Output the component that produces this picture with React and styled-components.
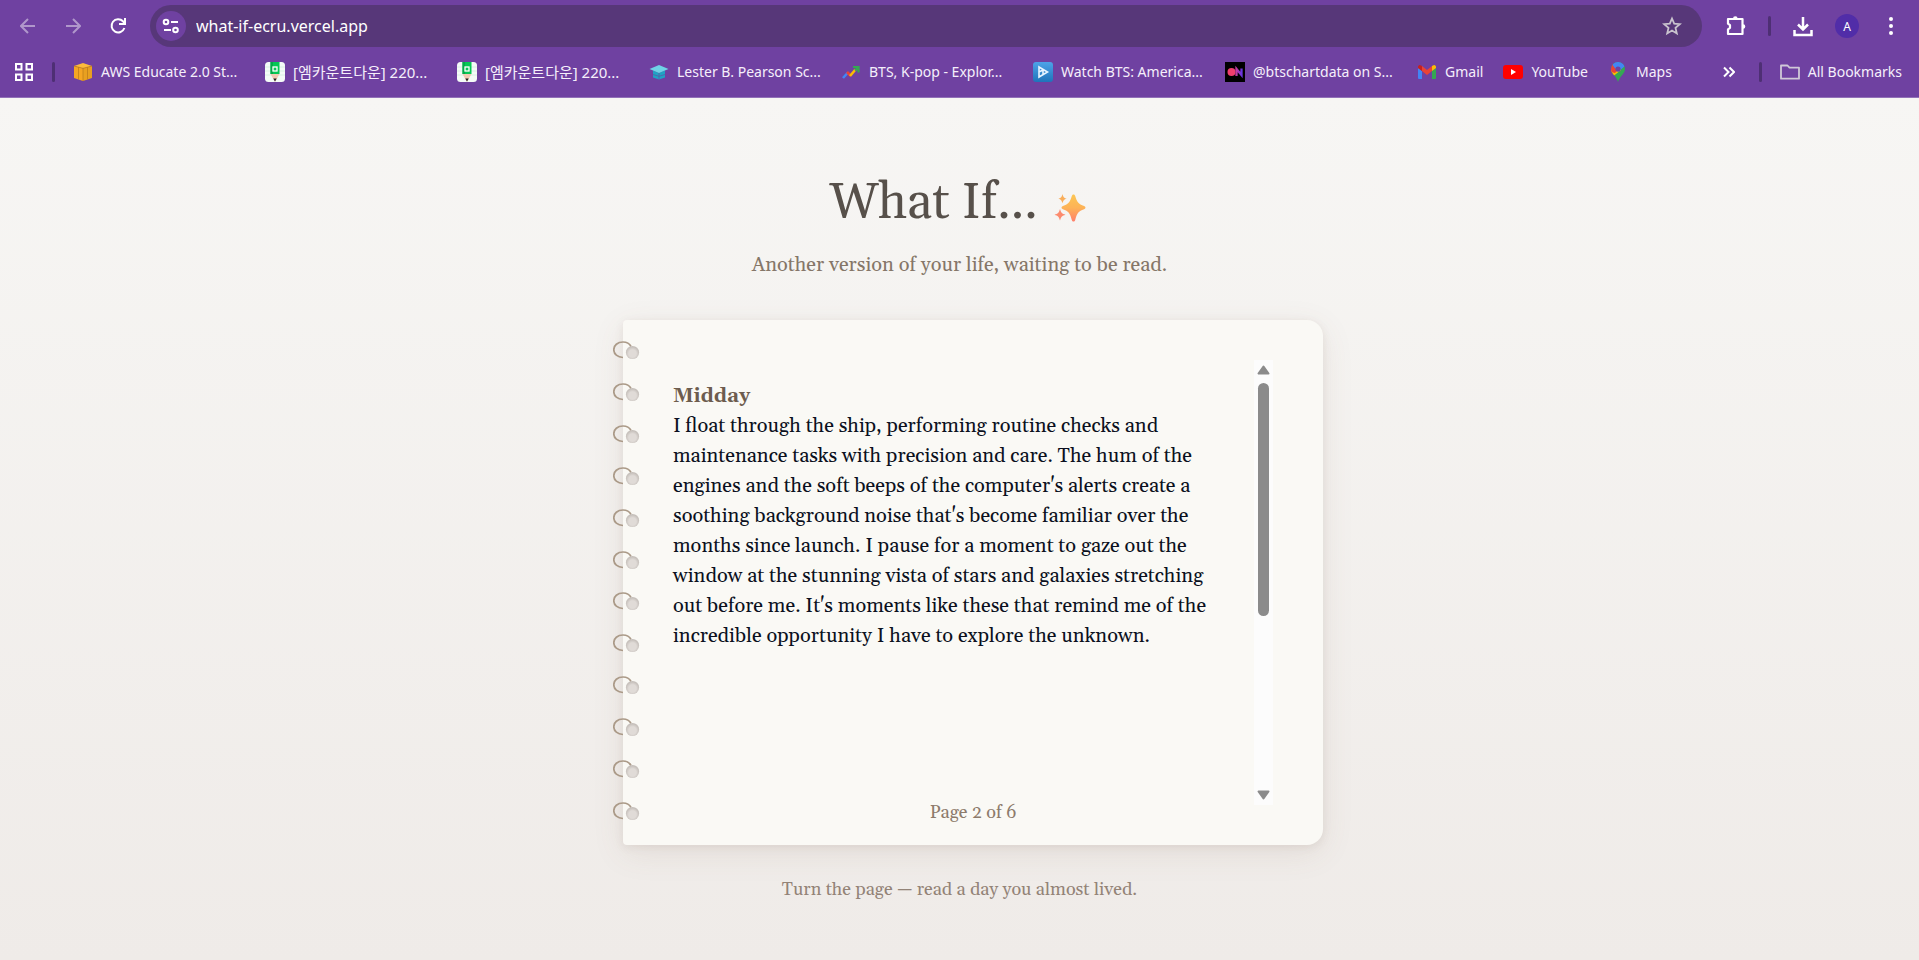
import React from "react";
import styled, { createGlobalStyle } from "styled-components";

const ui = `"Segoe UI", "Noto Sans", "Noto Sans CJK KR", sans-serif`;
const serif = `Georgia, Gelasio, "Liberation Serif", serif`;

const GlobalStyle = createGlobalStyle`
  * {
    box-sizing: border-box;
  }
  body {
    margin: 0;
    background: #efebe8;
  }
  button {
    border: 0;
    padding: 0;
    background: none;
    font: inherit;
    color: inherit;
    cursor: pointer;
  }
`;

const Screen = styled.div`
  display: flex;
  flex-direction: column;
  min-height: 100vh;
`;

const Browser = styled.header`
  background: #6f41a1;
  border-bottom: 1px solid #9271b8;
  color: #fff;
  font-family: ${ui};
`;

const Toolbar = styled.div`
  display: flex;
  align-items: center;
  height: 52px;
  padding: 0 16px;
`;

const Nav = styled.nav`
  display: flex;
  gap: 21px;
  margin-right: 20px;
`;

const IconButton = styled.button`
  display: grid;
  place-items: center;
  width: 24px;
  height: 24px;
  flex: none;
  opacity: ${(p) => (p.$dim ? 0.45 : 1)};
`;

const AddressBar = styled.div`
  display: flex;
  align-items: center;
  flex: 1;
  height: 42px;
  padding: 0 18px 0 6px;
  border-radius: 21px;
  background: #573779;
`;

const SiteInfo = styled.button`
  display: grid;
  place-items: center;
  width: 30px;
  height: 30px;
  border-radius: 50%;
  background: #6f41a1;
`;

const Url = styled.input`
  flex: 1;
  min-width: 0;
  margin-left: 10px;
  padding: 0;
  border: 0;
  outline: 0;
  background: none;
  color: #fff;
  font: 16px ${ui};
`;

const Tools = styled.div`
  display: flex;
  align-items: center;
  gap: 20px;
  margin-left: 22px;
`;

const Divider = styled.span`
  width: 3px;
  height: 20px;
  flex: none;
  border-radius: 2px;
  background: #4e2f74;
`;

const Avatar = styled.button`
  width: 24px;
  height: 24px;
  border-radius: 50%;
  background: #512da8;
  font-size: 12px;
`;

const Bookmarks = styled.nav`
  display: flex;
  align-items: center;
  height: 45px;
  padding: 0 17px 6px 12px;
  font-size: 14px;
`;

const BookmarkList = styled.div`
  display: flex;
  flex: 1;
  gap: 20px;
  min-width: 0;
  margin-left: 18px;
`;

const Bookmark = styled.a`
  display: flex;
  align-items: center;
  gap: 8px;
  width: ${(p) => (p.$wide ? "172px" : "auto")};
  color: #f5effb;
  line-height: 20px;
  text-decoration: none;
  white-space: nowrap;

  &:lang(ko) {
    font-size: 15px;
  }
`;

const Favicon = styled.span`
  display: grid;
  place-items: center;
  width: 20px;
  height: 20px;
  flex: none;
`;

const AppsGroup = styled.div`
  display: flex;
  align-items: center;
  gap: 16px;
`;

const More = styled.div`
  display: flex;
  align-items: center;
  gap: 18px;
`;

const Page = styled.main`
  display: flex;
  flex: 1;
  flex-direction: column;
  align-items: center;
  padding: 76px 20px 40px;
  background: linear-gradient(#f7f6f4, #efebe8);
  font-family: ${serif};
  font-variant-numeric: oldstyle-nums;
`;

const Title = styled.h1`
  margin: 0;
  color: #57504a;
  font-size: 50px;
  font-weight: 400;
  line-height: 60px;

  svg {
    margin: 0 4px;
    vertical-align: -4px;
  }
`;

const Tagline = styled.p`
  margin: 17px 0 0;
  color: #857668;
  font-size: 20px;
  line-height: 28px;
`;

const Notebook = styled.article`
  position: relative;
  width: 100%;
  max-width: 700px;
  min-height: 525px;
  margin: 41px 0 0 27px;
  padding: 40px 50px 20px;
  border-radius: 4px 16px 16px 4px;
  background: #faf9f5;
  box-shadow: 0 8px 32px rgba(121, 85, 72, 0.1), 0 2px 8px rgba(121, 85, 72, 0.1);
`;

const Binding = styled.div`
  position: absolute;
  top: 20px;
  bottom: 24px;
  left: -10px;
  display: flex;
  flex-direction: column;
  justify-content: space-between;
`;

const Reader = styled.div`
  display: flex;
  height: 445px;
`;

const Entry = styled.section`
  flex: 1;
  padding: 21px 40px 0 0;
  color: #0b1020;
  font-size: 20px;
  line-height: 30px;
`;

const EntryTitle = styled.h2`
  margin: 0;
  color: #6d5c4e;
  font-size: 20px;
  line-height: 30px;
`;

const EntryText = styled.p`
  margin: 0;
`;

const Scrollbar = styled.div`
  display: flex;
  flex-direction: column;
  align-items: center;
  width: 19px;
  background: #fcfcfc;
`;

const ScrollButton = styled.button`
  display: grid;
  place-items: center;
  width: 19px;
  height: 20px;
`;

const Track = styled.div`
  flex: 1;
  padding-top: 3px;
`;

const Thumb = styled.div`
  width: 11px;
  height: 233px;
  border-radius: 6px;
  background: #8b8b8b;
`;

const PageNumber = styled.p`
  margin: -4px 0 0;
  color: #8d7b6c;
  font-size: 18px;
  line-height: 24px;
  text-align: center;
`;

const Footnote = styled.p`
  margin: 33px 0 0;
  color: #938377;
  font-size: 18px;
  line-height: 24px;
`;

const line = { fill: "none", stroke: "currentColor", strokeWidth: 2 };

const ArrowIcon = ({ flip }) => (
  <svg width="16" height="16" viewBox="0 0 16 16" {...line}>
    <path d={flip ? "M1 8h13M8 1l7 7-7 7" : "M15 8H2M8 1L1 8l7 7"} />
  </svg>
);

const ReloadIcon = () => (
  <svg width="18" height="18" viewBox="0 0 18 18" {...line}>
    <path d="M15.4 11A6.6 6.6 0 1 1 14 4.3L15.5 6" />
    <path d="M16 1v6h-6" />
  </svg>
);

const TuneIcon = () => (
  <svg width="18" height="16" viewBox="0 0 18 16" {...line}>
    <circle cx="4" cy="4" r="2.3" />
    <path d="M9 4h7M2 12h7" />
    <circle cx="13.5" cy="12" r="2.3" />
  </svg>
);

const StarIcon = () => (
  <svg width="20" height="20" viewBox="0 0 20 20" fill="none" stroke="#c9c3ce" strokeWidth="1.8">
    <path d="M10 2.5l2.2 5.2 5.6.5-4.3 3.7 1.3 5.5-4.8-2.9-4.8 2.9 1.3-5.5-4.3-3.7 5.6-.5z" />
  </svg>
);

const PuzzleIcon = () => (
  <svg width="22" height="22" viewBox="0 0 22 22">
    <path
      d="M3 4h14.5v15H3v-4.7l2-1.5v-2.6L3 8.7z"
      fill="none"
      stroke="currentColor"
      strokeWidth="2.2"
      strokeLinejoin="round"
    />
    <path d="M8 3.5a2.3 2.3 0 0 1 4.6 0zM18 9.2a2.3 2.3 0 0 1 0 4.6z" fill="currentColor" />
  </svg>
);

const DownloadIcon = () => (
  <svg width="20" height="21" viewBox="0 0 20 21" fill="none" stroke="currentColor" strokeWidth="2.5">
    <path d="M10 1v12M5 8.5l5 5 5-5M1.5 14v5h17v-5" />
  </svg>
);

const DotsIcon = () => (
  <svg width="4" height="18" viewBox="0 0 4 18" fill="currentColor">
    <circle cx="2" cy="2" r="2" />
    <circle cx="2" cy="9" r="2" />
    <circle cx="2" cy="16" r="2" />
  </svg>
);

const AppsIcon = () => (
  <svg width="18" height="18" viewBox="0 0 18 18" {...line}>
    <path d="M1 1h5.5v5.5H1zM11.5 1H17v5.5h-5.5zM1 11.5h5.5V17H1zM11.5 11.5H17V17h-5.5z" />
  </svg>
);

const ChevronsIcon = () => (
  <svg width="12" height="12" viewBox="0 0 12 12" {...line}>
    <path d="M1 1.5L5.5 6 1 10.5M6.5 1.5L11 6l-4.5 4.5" />
  </svg>
);

const FolderIcon = () => (
  <svg width="20" height="16" viewBox="0 0 20 16" fill="none" stroke="#d0c8d8" strokeWidth="1.8">
    <path d="M1 1.5h6.5l2 2.2H19v11H1z" strokeLinejoin="round" />
  </svg>
);

const AwsIcon = () => (
  <svg width="20" height="20" viewBox="0 0 20 20">
    <path d="M1 4l9 2.5V19l-9-3z" fill="#f5a623" />
    <path d="M19 4l-9 2.5V19l9-3z" fill="#e8a020" />
    <path d="M1 4l9-3 9 3-9 2.5z" fill="#fdbb3b" />
    <path d="M1 4l9 2.3L19 4M10 6.3V19M5.5 5.2v12.3M14.5 5.2v12.3" stroke="#b8791a" strokeWidth=".7" fill="none" />
  </svg>
);

const PencilIcon = () => (
  <svg width="20" height="20" viewBox="0 0 20 20">
    <rect width="20" height="20" rx="3.5" fill="#f4fbf7" />
    <path d="M0 5h20M0 9h20M0 13h20" stroke="#d9f0e4" />
    <path d="M5.5 0h9v12h-9z" fill="#06c755" />
    <path d="M5.5 0H8v12H5.5z" fill="#04a94a" />
    <rect x="8" y="5" width="4" height="4" fill="none" stroke="#fff" strokeWidth="1.3" />
    <path d="M5.5 12h9L10 20z" fill="#f3c9b4" />
    <path d="M8.3 16.5h3.4L10 19.5z" fill="#222" />
  </svg>
);

const GraduateIcon = () => (
  <svg width="20" height="16" viewBox="0 0 20 16">
    <path d="M4 6.5L10 9l6-2.5v7l-6 2-6-2z" fill="#1fa3c4" />
    <path d="M10 1l9.5 4L10 9 .5 5z" fill="#6fd3e6" />
    <path d="M10 9v6.5M4 10.5l6 1.8 6-1.8" stroke="#5a5aa8" strokeWidth=".8" fill="none" />
  </svg>
);

const TrendsIcon = () => (
  <svg width="18" height="14" viewBox="0 0 18 14" fill="none" strokeWidth="2.6">
    <path d="M1 13l5-5.5" stroke="#4285f4" />
    <path d="M5 7l4 4" stroke="#ea4335" />
    <path d="M8 11l5.5-6.5" stroke="#fbbc04" />
    <path d="M11 2h5.5v5.5M13 5.5L16.5 2" stroke="#34a853" strokeWidth="2.2" />
  </svg>
);

const PlayIcon = () => (
  <svg width="20" height="20" viewBox="0 0 20 20">
    <defs>
      <linearGradient id="play" x1="0" y1="0" x2="0" y2="1">
        <stop offset="0" stopColor="#4da3e8" />
        <stop offset="1" stopColor="#1f74ba" />
      </linearGradient>
    </defs>
    <rect width="20" height="20" rx="3" fill="url(#play)" />
    <path d="M6 5l8.5 5L6 15zM6 10l4-2M10 8v5" fill="none" stroke="#e8f4ff" strokeWidth="1.6" />
  </svg>
);

const ChartDataIcon = () => (
  <svg width="20" height="20" viewBox="0 0 20 20">
    <defs>
      <linearGradient id="chart" x1="0" y1="0" x2="1" y2="0">
        <stop offset="0" stopColor="#c03aa0" />
        <stop offset="1" stopColor="#6a35e0" />
      </linearGradient>
    </defs>
    <rect width="20" height="20" fill="#000" />
    <circle cx="6.5" cy="10" r="4" fill="#ef3e6d" />
    <path d="M11.5 14V7l5 6V6.5" fill="none" stroke="url(#chart)" strokeWidth="2.3" />
  </svg>
);

const GmailIcon = () => (
  <svg width="18" height="14" viewBox="0 0 18 14">
    <path d="M0 3l4 3v8H1a1 1 0 0 1-1-1z" fill="#4285f4" />
    <path d="M18 3l-4 3v8h3a1 1 0 0 0 1-1z" fill="#34a853" />
    <path d="M4 1l5 4 5-4v5l-5 4-5-4z" fill="#ea4335" />
    <path d="M0 3V2A1.9 1.9 0 0 1 3 .4L4 1v5z" fill="#c5221f" />
    <path d="M18 3V2a1.9 1.9 0 0 0-3-1.6L14 1v5z" fill="#fbbc04" />
  </svg>
);

const YouTubeIcon = () => (
  <svg width="20" height="14" viewBox="0 0 20 14">
    <rect width="20" height="14" rx="3" fill="#f00" />
    <path d="M8 4l5 3-5 3z" fill="#fff" />
  </svg>
);

const MapsIcon = () => (
  <svg width="14" height="20" viewBox="0 0 14 20">
    <defs>
      <clipPath id="pin">
        <path d="M7 0a7 7 0 0 1 7 7c0 5-5 6.5-7 13C5 13.5 0 12 0 7a7 7 0 0 1 7-7z" />
      </clipPath>
    </defs>
    <g clipPath="url(#pin)">
      <path d="M0 0h14v20H0z" fill="#34a853" />
      <path d="M0 16V8l6-4 4 4z" fill="#fbbc04" />
      <path d="M0 10V2h4l4 5-4 4z" fill="#ea4335" />
      <path d="M2 0h12v4l-7 6-5.5-7z" fill="#4285f4" />
      <circle cx="7" cy="7" r="2.6" fill="#6f41a1" />
    </g>
  </svg>
);

const SparklesIcon = () => (
  <svg width="32" height="28" viewBox="0 0 32 28" aria-hidden="true">
    <defs>
      <linearGradient id="spark" x1="0" y1="0" x2="0" y2="1">
        <stop offset="0" stopColor="#fcc653" />
        <stop offset=".5" stopColor="#fdb257" />
        <stop offset="1" stopColor="#ff7f6b" />
      </linearGradient>
    </defs>
    <path
      d="M19.5.5c.9 0 1.4.6 1.700 1.6 1.7 6 3.200 8.100 8.900 9.900 1.900.6 1.900 2.700 0 3.300-5.700 1.800-7.200 4.300-8.900 10.600-.6 2-2.800 2-3.400 0-1.700-6.300-3.200-8.800-8.900-10.600-1.900-.6-1.900-2.700 0-3.300 5.700-1.800 7.200-3.900 8.900-9.900.3-1 .8-1.600 1.700-1.600z"
      fill="url(#spark)"
    />
    <path d="M8.5 0c.9 3.400 1.400 3.900 4.200 4.700-2.800.8-3.300 1.400-4.200 4.600-.9-3.200-1.400-3.800-4.200-4.600C7.100 3.900 7.600 3.400 8.500 0z" fill="#f9ae5b" />
    <path d="M6 15c1.200 4 2 4.600 5.500 5.700C8 21.800 7.200 22.500 6 26.500 4.800 22.500 4 21.800.5 20.700 4 19.600 4.800 19 6 15z" fill="#fc8b6e" />
  </svg>
);

const RingIcon = () => (
  <svg width="28" height="20" viewBox="0 0 28 20">
    <defs>
      <radialGradient id="hole" cx=".5" cy=".58" r=".52">
        <stop offset=".55" stopColor="#e0dbd7" />
        <stop offset="1" stopColor="#c4beb9" />
      </radialGradient>
    </defs>
    <path d="M10 17.5C4.500 17.500.8 14 .8 9.700S4.500 2 10 2c3.500 0 6.500 1.500 8 4.500" fill="none" stroke="#ab9a88" strokeWidth="1.7" />
    <circle cx="19.5" cy="12.5" r="6.600" fill="url(#hole)" />
  </svg>
);

const TriangleIcon = ({ down }) => (
  <svg width="13" height="10" viewBox="0 0 13 10" fill="#8b8b8b" stroke="#8b8b8b" strokeWidth="2" strokeLinejoin="round">
    <path d={down ? "M1.5 1.5h10l-5 7z" : "M1.5 8.5h10l-5-7z"} />
  </svg>
);

const bookmarks = [
  { label: "AWS Educate 2.0 St...", icon: <AwsIcon />, wide: true },
  { label: "[엠카운트다운] 220...", icon: <PencilIcon />, wide: true, lang: "ko" },
  { label: "[엠카운트다운] 220...", icon: <PencilIcon />, wide: true, lang: "ko" },
  { label: "Lester B. Pearson Sc...", icon: <GraduateIcon />, wide: true },
  { label: "BTS, K-pop - Explor...", icon: <TrendsIcon />, wide: true },
  { label: "Watch BTS: America...", icon: <PlayIcon />, wide: true },
  { label: "@btschartdata on S...", icon: <ChartDataIcon />, wide: true },
  { label: "Gmail", icon: <GmailIcon /> },
  { label: "YouTube", icon: <YouTubeIcon /> },
  { label: "Maps", icon: <MapsIcon /> },
];

const rings = Array.from({ length: 12 }, (_, i) => i);

const App = () => (
  <Screen>
    <GlobalStyle />
    <Browser>
      <Toolbar>
        <Nav>
          <IconButton $dim aria-label="Back"><ArrowIcon /></IconButton>
          <IconButton $dim aria-label="Forward"><ArrowIcon flip /></IconButton>
          <IconButton aria-label="Reload"><ReloadIcon /></IconButton>
        </Nav>
        <AddressBar>
          <SiteInfo aria-label="Site information"><TuneIcon /></SiteInfo>
          <Url aria-label="Address" defaultValue="what-if-ecru.vercel.app" />
          <IconButton aria-label="Bookmark this tab"><StarIcon /></IconButton>
        </AddressBar>
        <Tools>
          <IconButton aria-label="Extensions"><PuzzleIcon /></IconButton>
          <Divider />
          <IconButton aria-label="Downloads"><DownloadIcon /></IconButton>
          <Avatar aria-label="Profile">A</Avatar>
          <IconButton aria-label="Menu"><DotsIcon /></IconButton>
        </Tools>
      </Toolbar>
      <Bookmarks>
        <AppsGroup>
          <IconButton aria-label="Apps"><AppsIcon /></IconButton>
          <Divider />
        </AppsGroup>
        <BookmarkList>
          {bookmarks.map((b, index) => (
            <Bookmark href="#" key={`bookmark-${index}`} $wide={b.wide} lang={b.lang}>
              <Favicon>{b.icon}</Favicon>
              {b.label}
            </Bookmark>
          ))}
        </BookmarkList>
        <More>
          <IconButton aria-label="More bookmarks"><ChevronsIcon /></IconButton>
          <Divider />
          <Bookmark href="#">
            <Favicon><FolderIcon /></Favicon>
            All Bookmarks
          </Bookmark>
        </More>
      </Bookmarks>
    </Browser>
    <Page>
      <Title>What If... <SparklesIcon /></Title>
      <Tagline>Another version of your life, waiting to be read.</Tagline>
      <Notebook>
        <Binding>
          {rings.map((i) => <RingIcon key={`ring-${i}`} />)}
        </Binding>
        <Reader>
          <Entry>
            <EntryTitle>Midday</EntryTitle>
            <EntryText>
              I float through the ship, performing routine checks and maintenance tasks with
              precision and care. The hum of the engines and the soft beeps of the computer's
              alerts create a soothing background noise that's become familiar over the months
              since launch. I pause for a moment to gaze out the window at the stunning vista of
              stars and galaxies stretching out before me. It's moments like these that remind me
              of the incredible opportunity I have to explore the unknown.
            </EntryText>
          </Entry>
          <Scrollbar>
            <ScrollButton aria-label="Scroll up"><TriangleIcon /></ScrollButton>
            <Track><Thumb /></Track>
            <ScrollButton aria-label="Scroll down"><TriangleIcon down /></ScrollButton>
          </Scrollbar>
        </Reader>
        <PageNumber>Page 2 of 6</PageNumber>
      </Notebook>
      <Footnote>Turn the page — read a day you almost lived.</Footnote>
    </Page>
  </Screen>
);

export default App;
